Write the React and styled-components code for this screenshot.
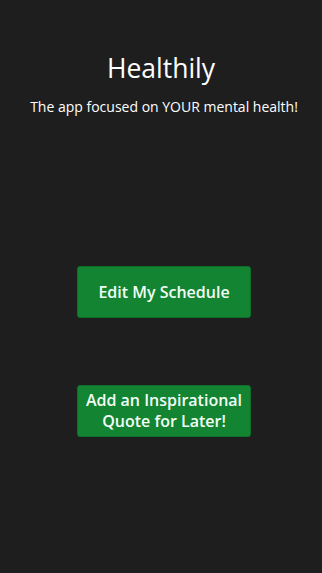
import React from "react";
import styled, { createGlobalStyle } from "styled-components";

const Global = createGlobalStyle`
  html, body { margin: 0; padding: 0; background: #1e1e1e; }
  body { font-family: "Open Sans", "Noto Sans", sans-serif; color: #fff; }
`;

const Page = styled.div`
  min-height: 573px;
  background: #1e1e1e;
  display: flex;
  flex-direction: column;
  align-items: center;
`;

const Header = styled.header`
  display: flex;
  flex-direction: column;
  align-items: center;
  padding-top: 50px;
`;

const Title = styled.h1`
  margin: 0;
  font-size: 26.5px;
  font-weight: 400;
  line-height: 36px;
`;

const Subtitle = styled.p`
  margin: 11px 0 0 6px;
  font-size: 14px;
  line-height: 19px;
`;

const Actions = styled.div`
  display: flex;
  flex-direction: column;
  align-items: center;
  gap: 67px;
  margin-top: 150px;
  margin-left: 6px;
`;

const Button = styled.button`
  width: 174px;
  height: 52px;
  background: #138432;
  border: 1px solid #0f6e29;
  border-radius: 3px;
  color: #f2fff6;
  font-family: "Open Sans", "Noto Sans", sans-serif;
  font-weight: 600;
  font-size: 16px;
  line-height: 21px;
  padding: 0 6px;
  display: flex;
  align-items: center;
  justify-content: center;
  text-align: center;
  box-sizing: border-box;
`;

export default function App() {
  return (
    <>
      <Global />
      <Page>
        <Header>
          <Title>Healthily</Title>
          <Subtitle>The app focused on YOUR mental health!</Subtitle>
        </Header>
        <Actions>
          <Button>Edit My Schedule</Button>
          <Button>Add an Inspirational Quote for Later!</Button>
        </Actions>
      </Page>
    </>
  );
}
